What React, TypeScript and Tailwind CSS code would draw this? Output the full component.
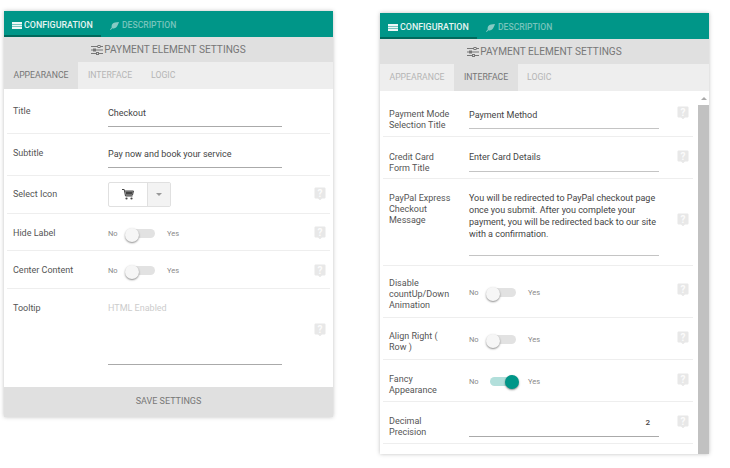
import React from "react";

function Help() {
  return (
    <svg width="12" height="14" viewBox="0 0 12 14" className="shrink-0">
      <path d="M1.5 0.5h9a1 1 0 0 1 1 1v9a1 1 0 0 1-1 1H8L6 13.2 4 11.5H1.5a1 1 0 0 1-1-1v-9a1 1 0 0 1 1-1z" fill="#e8e8e8" />
      <text x="6" y="9.5" textAnchor="middle" fontSize="10" fontWeight="700" fill="#fbfbfb" fontFamily="Roboto, sans-serif">?</text>
    </svg>
  );
}

function Toggle({ on = false }: { on?: boolean }) {
  return (
    <div className="flex items-center text-[7.5px] leading-[9px] text-[#8a8a8a]">
      <span className="w-[17px]">No</span>
      <span className={`relative ml-[4px] w-[26px] h-[9px] rounded-full block ${on ? "bg-[#b2dfdb]" : "bg-[#e2e2e2]"}`}>
        <span
          className={`absolute w-[14px] h-[14px] rounded-full ${on ? "top-[-2.5px] right-[-3px] bg-[#009688]" : "top-[-1px] left-[-4px] bg-[#f6f6f6]"} shadow-[0_1px_2px_rgba(0,0,0,0.45)]`}
        />
      </span>
      <span className="ml-[12px]">Yes</span>
    </div>
  );
}

function Row({
  label,
  h,
  children,
  help = true,
  wLabel,
  wControl,
  labelPt,
  helpPt,
}: {
  label: React.ReactNode;
  h: string;
  children: React.ReactNode;
  help?: boolean;
  wLabel: string;
  wControl: string;
  labelPt: string;
  helpPt?: string;
}) {
  return (
    <div className={`flex border-b border-[#eeeeee] ${h} pl-[6px] pr-[4px]`}>
      <div className={`${wLabel} ${labelPt} text-[9px] leading-[11px] text-[#555]`}>{label}</div>
      <div className={wControl}>{children}</div>
      <div className={`flex-1 flex justify-end items-start ${helpPt ?? ""}`}>{help && <Help />}</div>
    </div>
  );
}

function Input({
  value,
  h,
  pt,
  right = false,
  muted = false,
  light = false,
}: {
  value: React.ReactNode;
  h: string;
  pt: string;
  right?: boolean;
  muted?: boolean;
  light?: boolean;
}) {
  return (
    <div
      className={`${h} ${pt} border-b ${light ? "border-[#c4c4c4]" : "border-[#aaaaaa]"} leading-[12px] ${muted ? "text-[#cccccc]" : "text-[#444]"} ${right ? "text-right pr-[9px] text-[8px] font-medium" : "text-[9px]"}`}
    >
      {value}
    </div>
  );
}

function Header({ active }: { active: "a" | "i" }) {
  const tab = "h-[27px] flex items-center justify-center text-[8.7px]";
  return (
    <>
      <div className="h-[26px] bg-[#009688] flex text-[8.9px] font-medium">
        <div className="w-[97px] h-full border-b-2 border-[#00695c] flex items-start pt-[8px] pl-[8px] text-[#e6f4f2]">
          <svg width="10" height="7" viewBox="0 0 10 7" className="mr-[2px] mt-[3px]"><path d="M0 0h10v1.9H0zM0 2.55h10v1.9H0zM0 5.1h10V7H0z" fill="#eef7f6" /></svg>
          <span>CONFIGURATION</span>
        </div>
        <div className="flex items-start pt-[8px] pl-[9px] text-[#77c4bc] text-[8.6px]">
          <svg width="9" height="8" viewBox="0 0 9 8" className="mr-[3px] mt-[3px]"><path d="M9 0C6 .2 3.6.6 2.4 2 1.6 3 1.5 4.3 1.7 5.4L0 7.4l.6.6 1.8-1.8c1.3.4 2.8.3 3.9-.9C7.6 3.9 8.3 1.8 9 0z" fill="#86cbc4" /></svg>
          <span>DESCRIPTION</span>
        </div>
      </div>
      <div className="h-[25px] bg-[#e0e0e0] flex items-center justify-center text-[10.1px] text-[#777]">
        <svg width="12" height="10" viewBox="0 0 12 10" className="mr-[1px]" fill="none" stroke="#777" strokeWidth="1">
          <path d="M0 1.5h12M0 5h12M0 8.5h12" />
          <rect x="7" y="0.5" width="2" height="2" fill="#e0e0e0" />
          <rect x="2.5" y="4" width="2" height="2" fill="#e0e0e0" />
          <rect x="5.5" y="7.5" width="2" height="2" fill="#e0e0e0" />
        </svg>
        <span>PAYMENT ELEMENT SETTINGS</span>
      </div>
      <div className="bg-[#eeeeee] flex text-[#b5b5b5]">
        <div className={`${tab} w-[74px] ${active === "a" ? "bg-[#e0e0e0] text-[#757575]" : ""}`}>APPEARANCE</div>
        <div className={`${tab} w-[64px] ${active === "i" ? "bg-[#e0e0e0] text-[#757575]" : ""}`}>INTERFACE</div>
        <div className={`${tab} px-[9px]`}>LOGIC</div>
      </div>
    </>
  );
}

function Left() {
  const l = "w-[95px]";
  const c = "w-[174px]";
  return (
    <div className="w-[329px] h-[406px] mt-[11px] ml-[4px] bg-white flex flex-col shrink-0 shadow-[0_0_4px_rgba(0,0,0,0.25)]">
      <Header active="a" />
      <div className="flex-1 flex flex-col px-[3px]">
        <Row label="Title" h="h-[45px]" wLabel={l} wControl={c} help={false} labelPt="pt-[17px]">
          <Input value="Checkout" h="h-[38px]" pt="pt-[18px]" />
        </Row>
        <Row label="Subtitle" h="h-[42px]" wLabel={l} wControl={c} help={false} labelPt="pt-[14px]">
          <Input value="Pay now and book your service" h="h-[34px]" pt="pt-[14px]" />
        </Row>
        <Row label="Select Icon" h="h-[38px]" wLabel={l} wControl={c} labelPt="pt-[13px]" helpPt="pt-[11px]">
          <div className="mt-[6px] w-[63px] h-[25px] flex border border-[#e0e0e0] rounded-[2px]">
            <div className="w-[38px] flex items-center justify-center">
              <svg width="12" height="11" viewBox="0 0 12 11"><path d="M0 .5h2.2L3.5 7h7M2.8 2h8.7l-1 4H3.4" fill="none" stroke="#444" strokeWidth="1" /><path d="M3.3 2.5h7.6l-.7 3H3.8z" fill="#444" /><circle cx="4.5" cy="9.5" r="1.1" fill="#444" /><circle cx="9.5" cy="9.5" r="1.1" fill="#444" /></svg>
            </div>
            <div className="flex-1 bg-[#f3f3f3] border-l border-[#e0e0e0] flex items-center justify-center">
              <span className="w-0 h-0 border-x-[3.5px] border-x-transparent border-t-[3.5px] border-t-[#999]" />
            </div>
          </div>
        </Row>
        <Row label="Hide Label" h="h-[37px]" wLabel={l} wControl={c} labelPt="pt-[14px]" helpPt="pt-[12px]">
          <div className="pt-[15px]"><Toggle /></div>
        </Row>
        <Row label="Center Content" h="h-[38px]" wLabel={l} wControl={c} labelPt="pt-[14px]" helpPt="pt-[13px]">
          <div className="pt-[15px]"><Toggle /></div>
        </Row>
        <div className="flex-1 flex pl-[6px] pr-[4px]">
          <div className={`${l} pt-[14px] text-[9px] leading-[11px] text-[#555]`}>Tooltip</div>
          <div className={c}><Input value="HTML Enabled" h="h-[76px]" pt="pt-[13px]" muted /></div>
          <div className="flex-1 flex justify-end items-start pt-[34px]"><Help /></div>
        </div>
      </div>
      <div className="h-[30px] bg-[#e0e0e0] flex items-center justify-center text-[9px] text-[#777]">SAVE SETTINGS</div>
    </div>
  );
}

function Right() {
  const l = "w-[80px]";
  const c = "w-[190px]";
  return (
    <div className="w-[329px] h-[441px] mt-[13px] ml-[47px] bg-white flex flex-col shrink-0 overflow-hidden shadow-[0_0_4px_rgba(0,0,0,0.25)]">
      <Header active="i" />
      <div className="flex-1 flex min-h-0">
        <div className="flex-1 flex flex-col pl-[3px] pr-[5px]">
          <Row label={<>Payment Mode<br />Selection Title</>} h="h-[46px]" wLabel={l} wControl={c} labelPt="pt-[18px]" helpPt="pt-[15px]">
            <Input value="Payment Method" h="h-[38px]" pt="pt-[18px]" light />
          </Row>
          <Row label={<>Credit Card<br />Form Title</>} h="h-[42px]" wLabel={l} wControl={c} labelPt="pt-[15px]" helpPt="pt-[13px]">
            <Input value="Enter Card Details" h="h-[35px]" pt="pt-[14px]" light />
          </Row>
          <Row label={<>PayPal Express<br />Checkout<br />Message</>} h="h-[87px]" wLabel={l} wControl={c} labelPt="pt-[14px]" helpPt="pt-[34px]">
            <div className="h-[77px] border-b border-[#c4c4c4] pt-[13px] text-[9px] leading-[12px] text-[#444]">
              You will be redirected to PayPal checkout page once you submit. After you complete your payment, you will be redirected back to our site with a confirmation.
            </div>
          </Row>
          <Row label={<>Disable<br />countUp/Down<br />Animation</>} h="h-[52px]" wLabel={l} wControl={c} labelPt="pt-[12px]" helpPt="pt-[17px]">
            <div className="pt-[22px]"><Toggle /></div>
          </Row>
          <Row label={<>Align Right (<br />Row )</>} h="h-[42px]" wLabel={l} wControl={c} labelPt="pt-[13px]" helpPt="pt-[13px]">
            <div className="pt-[17px]"><Toggle /></div>
          </Row>
          <Row label={<>Fancy<br />Appearance</>} h="h-[42px]" wLabel={l} wControl={c} labelPt="pt-[14px]" helpPt="pt-[13px]">
            <div className="pt-[17px]"><Toggle on /></div>
          </Row>
          <Row label={<>Decimal<br />Precision</>} h="h-[42px]" wLabel={l} wControl={c} labelPt="pt-[14px]" helpPt="pt-[13px]">
            <Input value="2" h="h-[35px]" pt="pt-[15px]" right />
          </Row>
        </div>
        <div className="w-[11px] bg-white flex flex-col items-center">
          <div className="h-[14px] flex items-center justify-center">
            <span className="w-0 h-0 border-x-[3px] border-x-transparent border-b-[3px] border-b-[#aaa]" />
          </div>
          <div className="flex-1 w-full bg-[#c1c1c1]" />
        </div>
      </div>
    </div>
  );
}

export default function App() {
  return (
    <div className="w-[730px] h-[468px] bg-white flex items-start overflow-hidden font-['Roboto',sans-serif]">
      <Left />
      <Right />
    </div>
  );
}
